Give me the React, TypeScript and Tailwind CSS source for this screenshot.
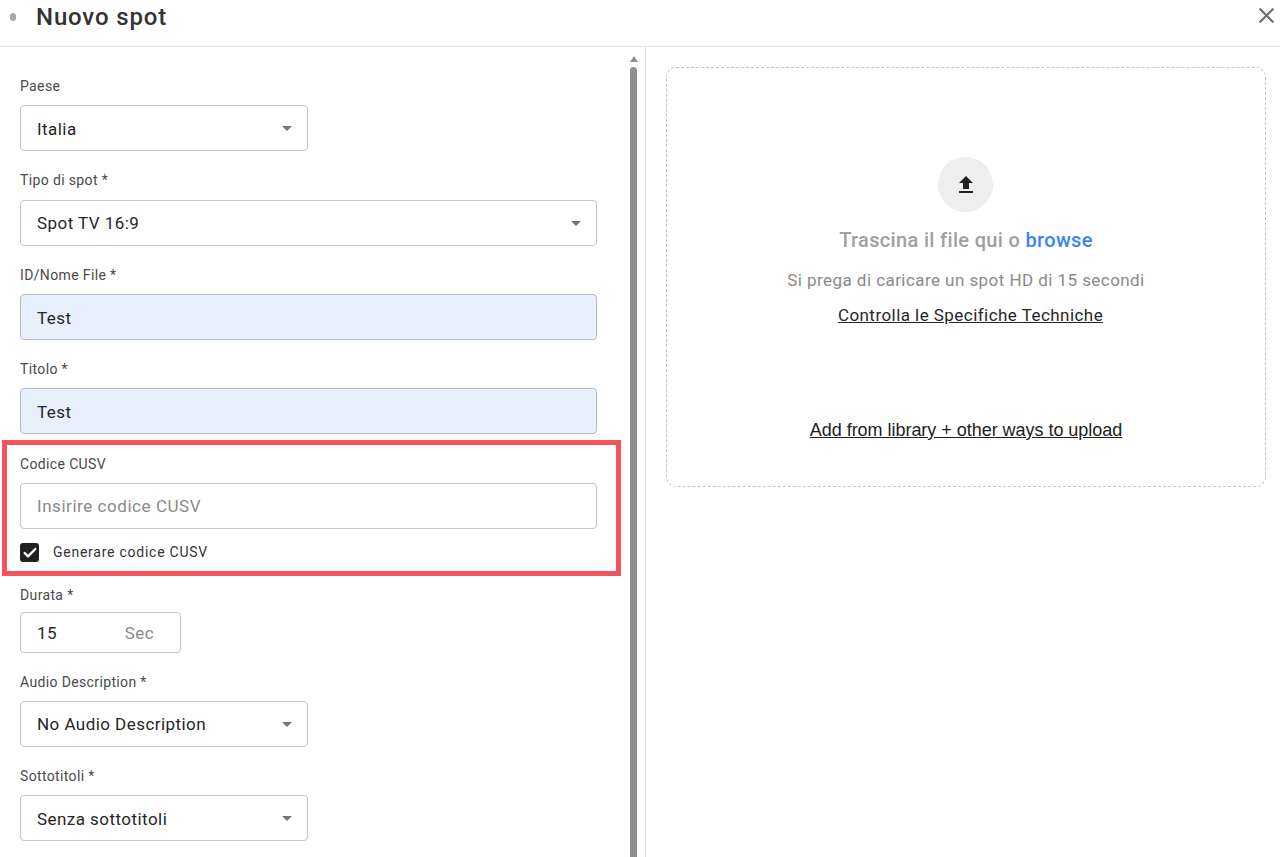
import React from 'react';
import { Check, X } from 'lucide-react';

const Label = ({ text }: { text: string }) => (
  <div className='h-5 text-[14px] leading-5 tracking-[0.36px] text-[#4a4a4a]'>{text}</div>
);

const Select = ({ value, width, textPad = 'pt-[2px]' }: { value: string; width: string; textPad?: string }) => (
  <div className={`${width} h-[46px] flex items-center justify-between pl-4 pr-[15px] border border-[#c4c4c4] rounded-[4px] text-[17px] tracking-[0.45px] text-[#262626]`}>
    <span className={textPad}>{value}</span>
    <span className='w-0 h-0 border-x-[5.5px] border-x-transparent border-t-[5.5px] border-t-[#757575]' />
  </div>
);

const FilledInput = ({ value }: { value: string }) => (
  <div className='w-[577px] h-[46px] flex items-center pl-4 pt-[3px] border border-[#b4b9c6] rounded-[4px] bg-[#e8f0fe] text-[17px] tracking-[0.45px] text-[#262626]'>
    {value}
  </div>
);

export default function App() {
  return (
    <div className='w-[1280px] h-[857px] overflow-hidden bg-white flex flex-col font-["Roboto",sans-serif]'>
      <header className='h-[47px] shrink-0 flex items-center border-b border-[#e0e0e4] pb-[13px]'>
        <span className='ml-[10px] w-[6px] h-[8px] rounded-full bg-[#a8a8a8]' />
        <h1 className='ml-[20px] text-[24px] font-medium tracking-[0.85px] text-[#333333]'>Nuovo spot</h1>
        <X className='ml-auto mr-[1px] mb-[2px] text-[#6e6e6e]' size={25} strokeWidth={2.2} />
      </header>

      <div className='flex flex-1 min-h-0'>
        <div className='w-[646px] shrink-0 flex border-r border-[#e0e0e4]'>
          <div className='w-[630px] shrink-0 pl-5 pt-[29px]'>
            <Label text='Paese' />
            <div className='mt-[9px] mb-[19px]'><Select value='Italia' width='w-[288px]' textPad='pt-[3px]' /></div>
            <Label text='Tipo di spot *' />
            <div className='mt-[10px] mb-[19px]'><Select value='Spot TV 16:9' width='w-[577px]' /></div>
            <Label text='ID/Nome File *' />
            <div className='mt-[9px] mb-[19px]'><FilledInput value='Test' /></div>
            <Label text='Titolo *' />
            <div className='mt-[9px] mb-[6px]'><FilledInput value='Test' /></div>

            <div className='-ml-[18px] w-[619px] h-[136px] border-[5px] border-[#f4535c] pl-[13px] pt-[9px]'>
              <Label text='Codice CUSV' />
              <div className='mt-[9px] w-[577px] h-[46px] flex items-center pl-4 pt-[2px] border border-[#c4c4c4] rounded-[4px] text-[17px] tracking-[0.55px] text-[#8a8a8a]'>
                Insirire codice CUSV
              </div>
              <div className='mt-[13px] flex items-center'>
                <span className='w-[19px] h-[19px] rounded-[3px] bg-[#212121] flex items-center justify-center'>
                  <Check className='text-white' size={16} strokeWidth={3.5} />
                </span>
                <span className='ml-[14px] text-[14px] tracking-[0.75px] text-[#333333]'>Generare codice CUSV</span>
              </div>
            </div>

            <div className='mt-[9px]'><Label text='Durata *' /></div>
            <div className='mt-[7px] mb-[19px] w-[161px] h-[41px] flex items-center justify-between pl-4 pr-[26px] border border-[#c4c4c4] rounded-[4px] text-[17px] tracking-[0.45px]'>
              <span className='pt-[2px] text-[#262626]'>15</span>
              <span className='pt-[2px] text-[17px] text-[#8a8a8a]'>Sec</span>
            </div>
            <Label text='Audio Description *' />
            <div className='mt-[9px] mb-[19px]'><Select value='No Audio Description' width='w-[288px]' /></div>
            <Label text='Sottotitoli *' />
            <div className='mt-[9px]'><Select value='Senza sottotitoli' width='w-[288px]' textPad='pt-[3px]' /></div>
          </div>

          <div className='w-[7px] flex flex-col items-center pt-[9px]'>
            <span className='w-0 h-0 border-x-[4.5px] border-x-transparent border-b-[6px] border-b-[#8f8f8f]' />
            <span className='mt-[5px] w-[7px] flex-1 rounded-t-full bg-[#8f8f8f]' />
          </div>
        </div>

        <div className='flex-1 pl-5 pt-5 pr-[14px]'>
          <div className='h-[420px] flex flex-col items-center border border-dashed border-[#c4c4c4] rounded-[10px] pt-[89px]'>
            <div className='mr-[1px] w-[55px] h-[55px] rounded-full bg-[#eeeeee] flex items-center justify-center'>
              <svg width='24' height='24' viewBox='0 0 24 24' fill='#212121'>
                <path d='M9 16h6v-6h4l-7-7-7 7h4v6z' />
                <path d='M5 18h14v2H5z' />
              </svg>
            </div>
            <p className='mt-[14px] text-[20px] leading-7 font-medium tracking-[0.33px] text-[#a0a0a0]'>
              Trascina il file qui o <span className='text-[#3b82f6]'>browse</span>
            </p>
            <p className='mt-[14px] text-[17px] leading-6 tracking-[0.44px] text-[#8a8a8a]'>Si prega di caricare un spot HD di 15 secondi</p>
            <a className='ml-[9px] mt-[11px] text-[17px] leading-6 tracking-[0.45px] text-[#262626] underline'>Controlla le Specifiche Techniche</a>
            <a className='mt-[91px] text-[18px] leading-6 tracking-[-0.03px] font-["Liberation_Sans",sans-serif] text-[#212121] underline'>Add from library + other ways to upload</a>
          </div>
        </div>
      </div>
    </div>
  );
}
